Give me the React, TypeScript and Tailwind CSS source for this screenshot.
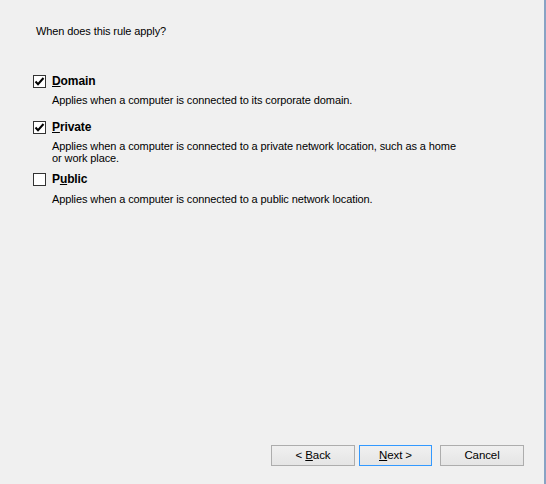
import React from 'react';

type Option = {
  key: string;
  before: string;
  accel: string;
  after: string;
  checked: boolean;
  lines: string[];
  rowClass: string;
  descClass: string;
};

const options: Option[] = [
  {
    key: 'domain',
    before: '',
    accel: 'D',
    after: 'omain',
    checked: true,
    lines: ['Applies when a computer is connected to its corporate domain.'],
    rowClass: 'mt-[36px]',
    descClass: 'mt-[6px]',
  },
  {
    key: 'private',
    before: '',
    accel: 'P',
    after: 'rivate',
    checked: true,
    lines: [
      'Applies when a computer is connected to a private network location, such as a home',
      'or work place.',
    ],
    rowClass: 'mt-[15px]',
    descClass: 'mt-[6px]',
  },
  {
    key: 'public',
    before: 'P',
    accel: 'u',
    after: 'blic',
    checked: false,
    lines: ['Applies when a computer is connected to a public network location.'],
    rowClass: 'mt-[9px]',
    descClass: 'mt-[7px]',
  },
];

function CheckBox({ checked }: { checked: boolean }) {
  return (
    <div className="w-[13px] h-[13px] border border-[#333333] bg-white flex items-center justify-center shrink-0">
      {checked && (
        <svg width="11" height="11" viewBox="0 0 11 11">
          <path d="M1.5 5.5 L4 8.2 L9.5 2" fill="none" stroke="#000" strokeWidth="2" />
        </svg>
      )}
    </div>
  );
}

function Button({ children, primary, width }: { children: React.ReactNode; primary?: boolean; width: string }) {
  return (
    <button
      className={`${width} h-[21px] border ${
        primary ? 'border-[#3399ff]' : 'border-[#adadad]'
      } bg-gradient-to-b from-[#f0f0f0] to-[#e5e5e5] text-[11.5px] tracking-[-0.1px] leading-[19px] text-black`}
    >
      {children}
    </button>
  );
}

export default function App() {
  return (
    <div
      className="w-[546px] h-[484px] bg-[#f0f0f0] border-r-2 border-[#88a3c4] flex flex-col text-black tracking-[-0.1px]"
      style={{ fontFamily: '"Liberation Sans", Arial, sans-serif' }}
    >
      <div className="pt-[23px] pl-[36px] text-[11px] leading-[16px]">When does this rule apply?</div>

      <div className="pl-[33px]">
        {options.map((opt) => (
          <div key={opt.key}>
            <div className={`flex items-center gap-[6px] h-[13px] ${opt.rowClass}`}>
              <CheckBox checked={opt.checked} />
              <span className="text-[12px] font-bold leading-[13px]">
                {opt.before}
                <span className="underline underline-offset-1">{opt.accel}</span>
                {opt.after}
              </span>
            </div>
            <div className={`pl-[19px] text-[11px] leading-[12px] ${opt.descClass}`}>
              {opt.lines.map((l, i) => (
                <div key={i}>{l}</div>
              ))}
            </div>
          </div>
        ))}
      </div>

      <div className="mt-auto mb-[18px] pr-[20px] flex justify-end">
        <Button width="w-[84px]">
          &lt; <span className="underline underline-offset-1">B</span>ack
        </Button>
        <div className="w-[4px]" />
        <Button width="w-[73px]" primary>
          <span className="underline underline-offset-1">N</span>ext &gt;
        </Button>
        <div className="w-[8px]" />
        <Button width="w-[84px]">Cancel</Button>
      </div>
    </div>
  );
}
